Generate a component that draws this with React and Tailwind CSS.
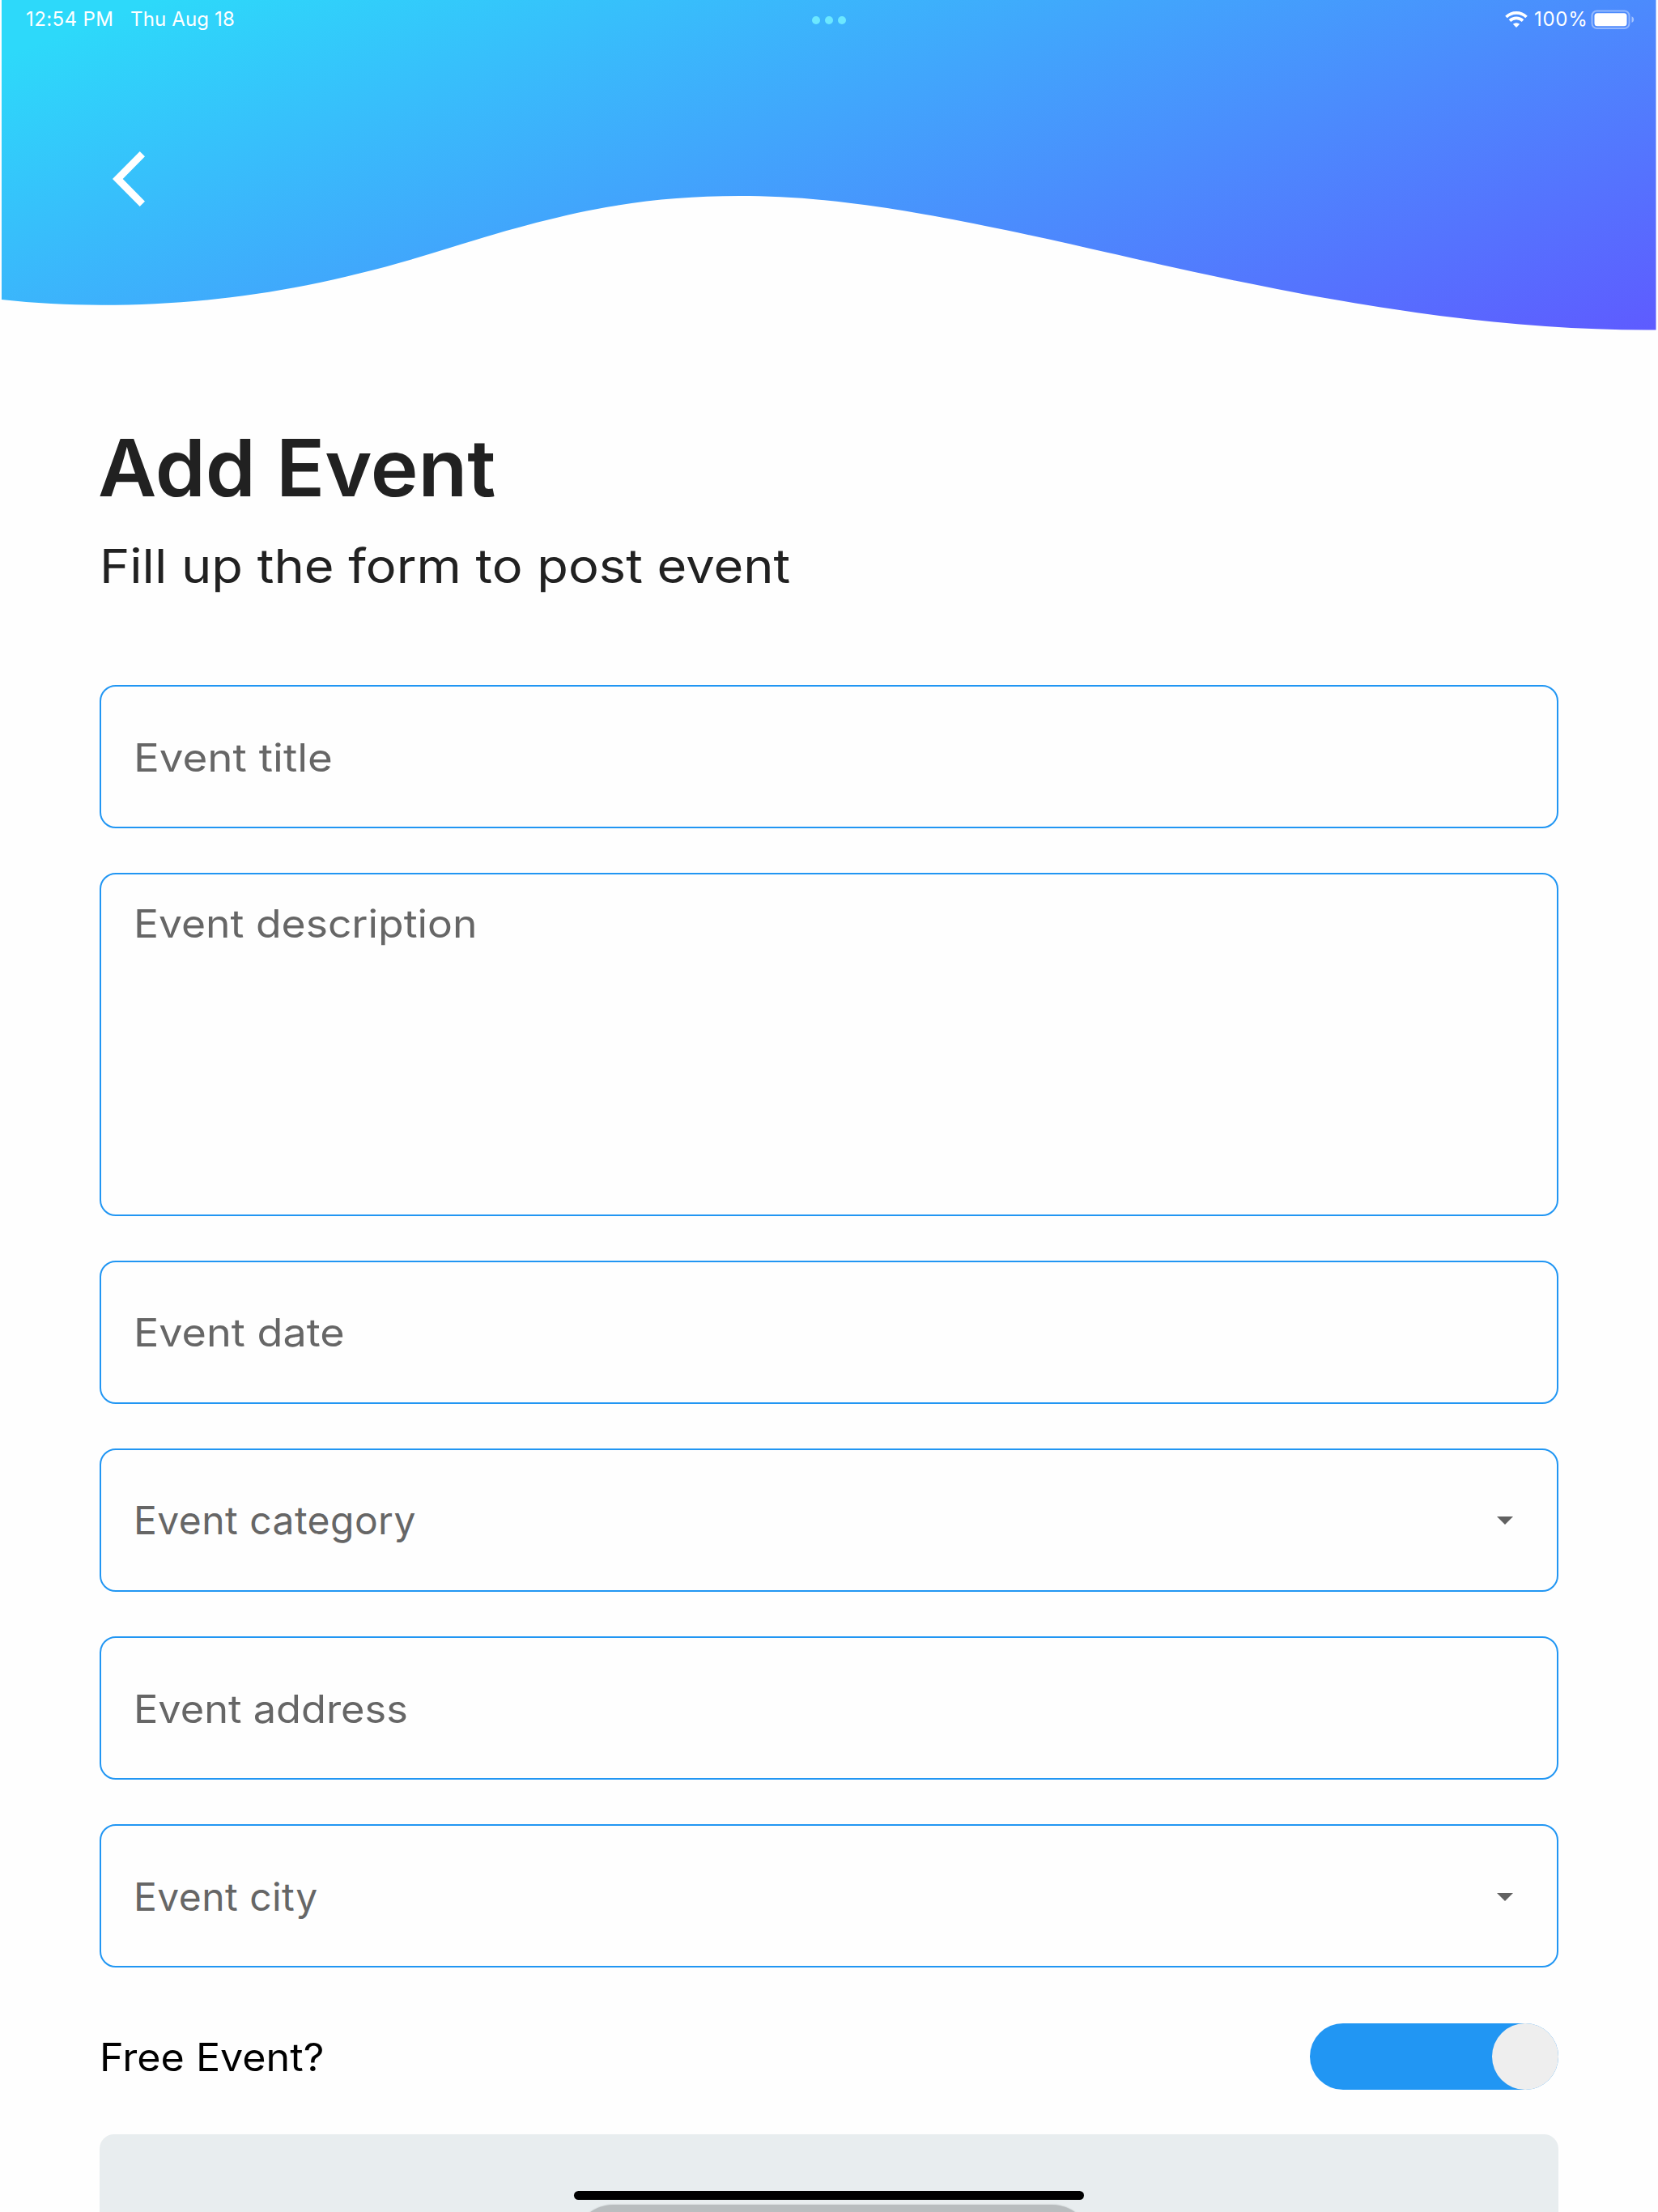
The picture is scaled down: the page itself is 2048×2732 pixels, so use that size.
import React from "react";

function HeaderWave() {
  return (
    <svg className="absolute left-0 top-0 h-[412px] w-[2048px]" viewBox="0 0 2048 412">
      <defs>
        <linearGradient id="wave" gradientUnits="userSpaceOnUse" x1="0" y1="70" x2="358" y2="1046">
          <stop offset="0" stopColor="#2dd9fa" />
          <stop offset="1" stopColor="#5f59ff" />
        </linearGradient>
      </defs>
      <path
        fill="url(#wave)"
        d="M2 0V370C42 374.500 84 376.700 125 376.700C269.600 376.700 398.500 355.600 555 306.300C693.800 262.600 788 242 913 242C1028 242 1144 260.100 1380 314.600C1669 381.500 1856 407.500 2045.500 407.500V0Z"
      />
    </svg>
  );
}

function StatusBar() {
  return (
    <div className="relative flex h-12 shrink-0 items-center justify-between pl-8 pr-[29px] text-[24px] leading-none text-white">
      <div className="flex gap-[21px]">
        <span className="w-[108px] whitespace-nowrap tracking-[0.4px]">12:54 PM</span>
        <span className="whitespace-nowrap tracking-[0.15px]">Thu Aug 18</span>
      </div>
      <div className="absolute left-[1003px] top-5 flex gap-1.5">
        <span className="size-2.5 rounded-full bg-[#6ce8ff]" />
        <span className="size-2.5 rounded-full bg-[#6ce8ff]" />
        <span className="size-2.5 rounded-full bg-[#6ce8ff]" />
      </div>
      <div className="flex items-center">
        <svg className="mr-2 h-5 w-7" viewBox="0 0 28 20">
          <g fill="none" stroke="#fff" strokeWidth="3.700">
            <path d="M1.500 7A18 18 0 0 1 26.500 7" />
            <path d="M6 11.600A11.600 11.600 0 0 1 22 11.600" />
          </g>
          <path d="M14 20L9.800 15.800A6.200 6.200 0 0 1 18.200 15.800Z" fill="#fff" />
        </svg>
        <span className="mr-[5px] w-[65px] whitespace-nowrap tracking-[0.7px]">100%</span>
        <svg className="h-6 w-[54px]" viewBox="0 0 54 24">
          <rect x="1.500" y="1.500" width="46" height="21.500" rx="6" fill="none" stroke="#fff" strokeOpacity=".4" strokeWidth="2" />
          <rect x="4.500" y="4.200" width="40" height="16" rx="3.500" fill="#fff" />
          <path d="M50.500 8.300C54 9.500 54 14.800 50.500 16Z" fill="#fff" fillOpacity=".5" />
        </svg>
      </div>
    </div>
  );
}

function Field({ label, dropdown, text }) {
  return (
    <div className="flex h-[177px] shrink-0 items-center justify-between rounded-[20px] border-2 border-[#2196f3] pl-[40px] pr-[54px] pt-[2px]">
      <span className={"origin-left whitespace-nowrap text-[48px] leading-[60px] text-[#666] " + text}>{label}</span>
      {dropdown && (
        <svg className="h-[10px] w-5" viewBox="0 0 20 10">
          <path d="M0 0H20L10 10Z" fill="#616161" />
        </svg>
      )}
    </div>
  );
}

export default function App() {
  return (
    <div className="relative flex h-[2732px] w-[2048px] flex-col overflow-hidden bg-[#fefefe] font-['Inter',sans-serif]">
      <HeaderWave />
      <StatusBar />
      <button className="relative ml-[139px] mt-[139px] h-[68px] w-10 shrink-0">
        <svg className="h-[68px] w-10" viewBox="0 0 40 68">
          <path d="M0 34L33.700 0L40 6.300L12.700 34L40 61.700L33.700 68Z" fill="#fff" />
        </svg>
      </button>

      <main className="mt-[263px] flex shrink-0 flex-col px-[123px]">
        <h1 className="-ml-[2px] h-[120px] origin-left scale-x-[1.025] whitespace-nowrap text-[97px] font-semibold leading-[120px] text-[#212121]">
          Add Event
        </h1>
        <p className="mt-[23px] h-[76px] origin-left scale-x-[1.089] whitespace-nowrap text-[58px] leading-[76px] text-[#212121]">
          Fill up the form to post event
        </p>

        <form className="mt-[109px] flex flex-col gap-[55.200px]">
          <Field label="Event title" text="scale-x-[1.102]" />
          <div className="flex h-[423.400px] items-start rounded-[20px] border-2 border-[#2196f3] pl-[40px] pt-[31px]">
            <span className="origin-left scale-x-[1.075] whitespace-nowrap text-[48px] leading-[60px] text-[#666]">
              Event description
            </span>
          </div>
          <Field label="Event date" text="scale-x-[1.086]" />
          <Field label="Event category" dropdown text="tracking-[0.45px]" />
          <Field label="Event address" text="scale-x-[1.052]" />
          <Field label="Event city" dropdown text="tracking-[0.45px]" />
        </form>

        <div className="mt-[69px] flex h-[82px] items-center justify-between">
          <span className="mt-[2px] origin-left scale-x-[1.046] whitespace-nowrap text-[48px] leading-[60px] text-black">
            Free Event?
          </span>
          <div className="flex h-[82px] w-[307px] justify-end rounded-full bg-[#2196f3]">
            <span className="size-[82px] rounded-full bg-[#eee]" />
          </div>
        </div>

        <div className="mt-[55px] h-[240px] shrink-0 rounded-[18px] bg-[#e8edef] pl-[585px] pr-[576px] pt-[87px]">
          <div className="h-[100px] rounded-full bg-[#b9bdbf] shadow-[0_0_2px_#b9bdbf]" />
        </div>
      </main>

      <div className="absolute left-[709px] top-[2706px] h-[11px] w-[630px] rounded-full bg-black" />
    </div>
  );
}
